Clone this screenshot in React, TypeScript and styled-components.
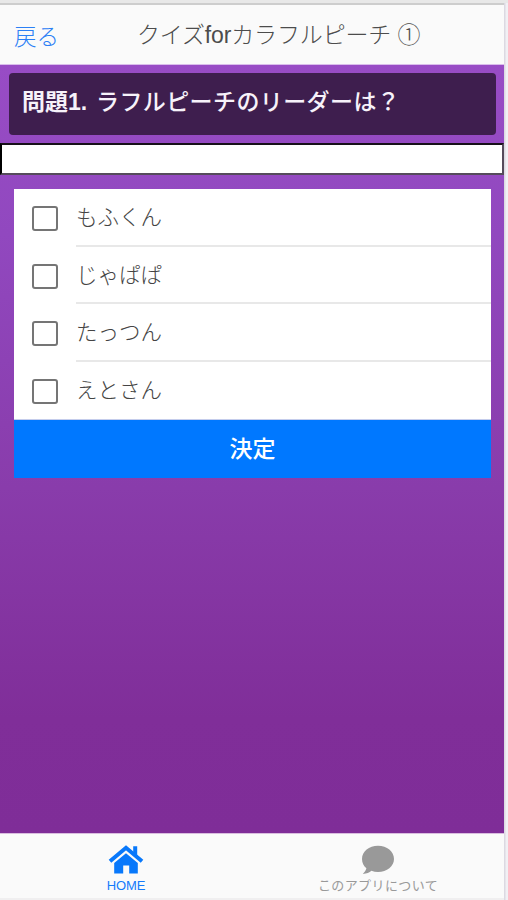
import React from 'react';
import styled, { createGlobalStyle } from 'styled-components';

const GlobalStyle = createGlobalStyle`
  * { box-sizing: border-box; }
  html, body { margin: 0; padding: 0; overflow: hidden; }
  body {
    font-family: "Liberation Sans", "Noto Sans CJK JP", sans-serif;
    font-weight: 300;
    background: #f0eff3;
  }
`;

const Frame = styled.div`
  width: 508px;
  height: 900px;
  padding-right: 4px;
  border-top: 3px solid #e8e8e8;
  background: linear-gradient(90deg, #f0eff3 504px, #dcd9e2 504px, #dcd9e2 505px, #f1f0f4 506px);
`;

const Screen = styled.div`
  display: flex;
  flex-direction: column;
  width: 504px;
  height: 897px;
  border-top: 2px solid #cdcdcd;
  border-bottom: 2px solid #f0eff0;
`;

const NavBar = styled.header`
  display: flex;
  height: 60px;
  flex: none;
  align-items: center;
  background: #fafafa;
  border-bottom: 1px solid #d9bdeb;
  white-space: nowrap;
`;

const BackButton = styled.button`
  width: 137px;
  padding: 6px 0 0 14px;
  border: 0;
  background: none;
  color: #2c80f5;
  font: inherit;
  font-size: 22.5px;
  line-height: 30px;
  text-align: left;
`;

const Title = styled.h1`
  margin: 0;
  color: #4c4c4c;
  font-size: 23px;
  font-weight: 300;
  line-height: 30px;
  letter-spacing: -0.15px;
`;

const Content = styled.main`
  display: flex;
  flex: 1;
  flex-direction: column;
  background: linear-gradient(#984cc5, #9148bf 22%, #893cab 55%, #802e99 85%, #7f2d98);
`;

const Question = styled.h2`
  height: 62px;
  margin: 8px 8px 0 9px;
  padding: 13px 13px;
  border-radius: 4px;
  background: #3e1e4e;
  color: #f7f2fa;
  font-size: 23px;
  font-weight: 500;
  line-height: 32px;
  letter-spacing: 0.4px;
  white-space: nowrap;
`;

const Numbering = styled.span`
  margin-right: 2px;
  font-weight: 700;
  letter-spacing: 0;
`;

const ProgressBox = styled.div`
  height: 32px;
  margin-top: 8px;
  border: 2px solid #554b5b;
  border-top-color: #171019;
  border-left: 2px solid #000;
  background: #fff;
`;

const Form = styled.form`
  width: 477px;
  margin: 14px 0 0 14px;
`;

const Choices = styled.div`
  height: 231px;
  padding-left: 18px;
  background: #fff;
  border-bottom: 1px solid #c5cdec;
`;

const Choice = styled.label`
  display: flex;
  height: 57.7px;
  align-items: center;
`;

const Checkbox = styled.input`
  width: 26px;
  height: 25px;
  margin: 1px 18px 0 0;
  flex: none;
  appearance: none;
  border: 2px solid #757575;
  border-radius: 3px;
  background: #fff;
`;

const ChoiceText = styled.span<{ $last: boolean }>`
  flex: 1;
  height: 100%;
  border-bottom: ${({ $last }) => ($last ? '0' : '2px solid #e8e8e8')};
  color: #444;
  font-size: 21.5px;
  line-height: 58px;
`;

const SubmitButton = styled.button`
  display: block;
  width: 100%;
  height: 58px;
  padding: 0 0 5px;
  border: 0;
  background: #0078ff;
  color: #fff;
  font: inherit;
  font-size: 23px;
  font-weight: 500;
`;

const TabBar = styled.nav`
  display: flex;
  height: 65px;
  flex: none;
  border-top: 1px solid #d9bddf;
  background: #fafafa;
`;

const Tab = styled.a<{ $active?: boolean }>`
  display: flex;
  width: 252px;
  flex-direction: column;
  align-items: center;
  color: ${({ $active }) => ($active ? '#157bfa' : '#999')};
  font-size: 13px;
  font-weight: 400;
  line-height: 18px;
  white-space: nowrap;

  svg { display: block; margin-top: 11px; }
`;

const TabText = styled.span<{ $spacing: number }>`
  margin-top: 2px;
  letter-spacing: ${({ $spacing }) => $spacing}px;
`;

const HomeIcon = () => (
  <svg width="36" height="30" viewBox="0 0 36 30" fill="none">
    <path d="M2 16.2 18 2.8l16 13.4" stroke="#0878fb" strokeWidth="4" />
    <path d="M25.2 1.2h4v10l-4-3.4z" fill="#0878fb" />
    <path d="M18 8.3 29.8 18v10.5h-8.6V20.5h-6v8H6.2V18z" fill="#0878fb" />
  </svg>
);

const CommentIcon = () => (
  <svg width="34" height="30" viewBox="0 0 34 30" fill="#999">
    <path d="M17 .8C8 .8 1 6.6 1 14c0 4 1.7 7 4.4 9.3-.5 2-1.8 3.8-3.6 5.6 4 0 6.6-1.4 8.6-3.1 2 .8 4.3 1.2 6.6 1.2 9 0 16-5.7 16-13S26 .8 17 .8Z" />
  </svg>
);

const choices = ['もふくん', 'じゃぱぱ', 'たっつん', 'えとさん'];

export default function App() {
  return (
    <>
      <GlobalStyle />
      <Frame>
        <Screen>
          <NavBar>
            <BackButton>戻る</BackButton>
            <Title>クイズforカラフルピーチ ①</Title>
          </NavBar>
          <Content>
            <Question><Numbering>問題1.</Numbering> ラフルピーチのリーダーは？</Question>
            <ProgressBox />
            <Form>
              <Choices>
                {choices.map((name, index) => (
                  <Choice key={name}>
                    <Checkbox type="checkbox" />
                    <ChoiceText $last={index === choices.length - 1}>{name}</ChoiceText>
                  </Choice>
                ))}
              </Choices>
              <SubmitButton type="button">決定</SubmitButton>
            </Form>
          </Content>
          <TabBar>
            <Tab $active>
              <HomeIcon />
              <TabText $spacing={-0.1}>HOME</TabText>
            </Tab>
            <Tab>
              <CommentIcon />
              <TabText $spacing={0.4}>このアプリについて</TabText>
            </Tab>
          </TabBar>
        </Screen>
      </Frame>
    </>
  );
}
